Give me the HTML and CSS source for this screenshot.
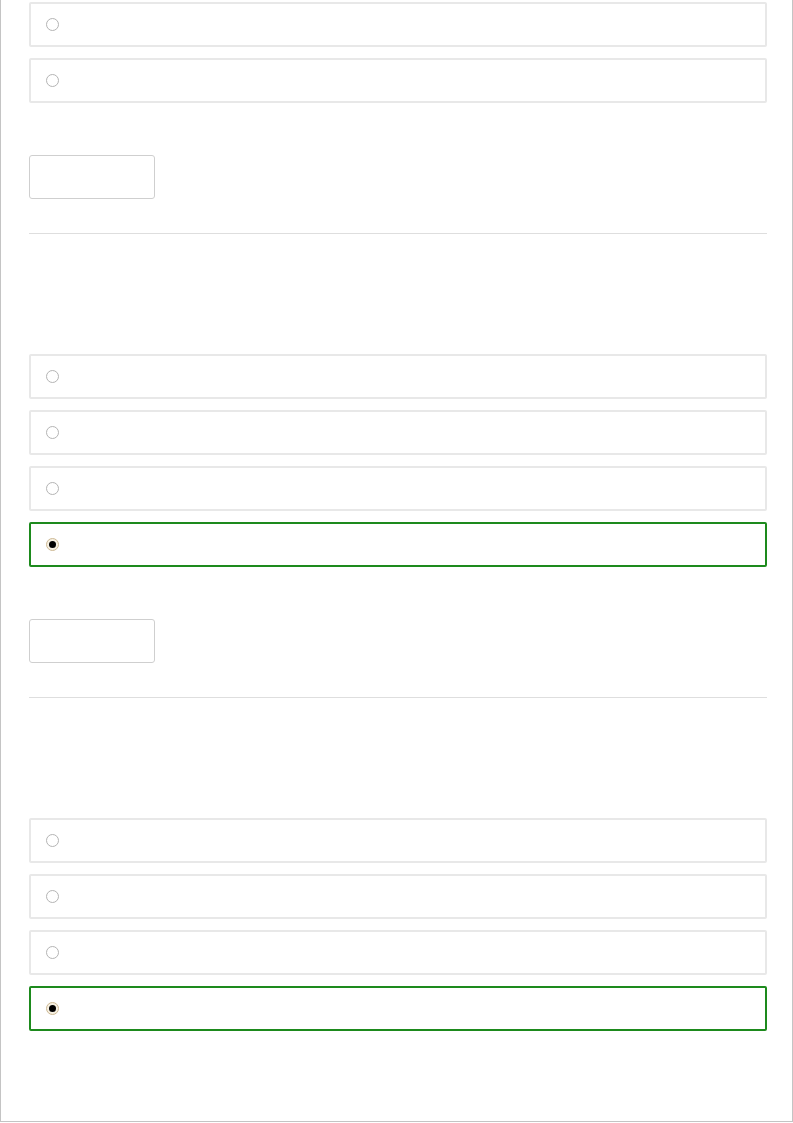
FILE: index.html
```html
<!DOCTYPE html>
<html lang="en">
<head>
    <meta charset="UTF-8">
    <meta name="viewport" content="width=device-width, initial-scale=1.0">
    <title>Quiz</title>
    <link rel="stylesheet" href="styles.css">
</head>
<body>

<div class="page">
    <!-- question 1 (scrolled, only the last options are visible) -->
    <form class="question first">
        <div class="options">
            <label class="option"><span class="radio"></span></label>
            <label class="option"><span class="radio"></span></label>
        </div>
        <button type="button" class="submit"></button>
    </form>
    <hr class="divider">

    <!-- question 2 -->
    <form class="question">
        <div class="question-text"></div>
        <div class="options">
            <label class="option"><span class="radio"></span></label>
            <label class="option"><span class="radio"></span></label>
            <label class="option"><span class="radio"></span></label>
            <label class="option selected"><span class="radio checked"></span></label>
        </div>
        <button type="button" class="submit"></button>
    </form>
    <hr class="divider">

    <!-- question 3 -->
    <form class="question">
        <div class="question-text"></div>
        <div class="options">
            <label class="option"><span class="radio"></span></label>
            <label class="option"><span class="radio"></span></label>
            <label class="option"><span class="radio"></span></label>
            <label class="option selected"><span class="radio checked"></span></label>
        </div>
    </form>
</div>

</body>
</html>
```

FILE: styles.css
```css
html, body {
    margin: 0;
    padding: 0;
    background: white;
    font-family: "Liberation Sans", Arial, sans-serif;
}

.page {
    box-sizing: border-box;
    width: 793px;
    height: 1122px;
    padding: 0 25px 0 28px;
    border: 1px solid #c4c4c4;
    border-top: none;
    overflow: hidden;
}

.question {
    margin: 0;
}

.question.first {
    padding-top: 2px;
}

.question-text {
    height: 120px;
}

.options {
    display: flex;
    flex-direction: column;
    gap: 11px;
}

.option {
    box-sizing: border-box;
    display: flex;
    align-items: center;
    height: 45px;
    padding-left: 15px;
    border: 2px solid #e8e8e8;
    border-radius: 2px;
    cursor: pointer;
}

.option.selected {
    border-color: #1d8a1d;
}

.radio {
    box-sizing: border-box;
    display: inline-block;
    width: 13px;
    height: 13px;
    border: 1px solid #b4b4b4;
    border-radius: 50%;
    background: white;
    position: relative;
}

.radio.checked {
    border-color: #cdb994;
    background: #f6f0e2;
}

.radio.checked::after {
    content: "";
    position: absolute;
    left: 2px;
    top: 2px;
    width: 7px;
    height: 7px;
    border-radius: 50%;
    background: black;
}

.submit {
    display: block;
    box-sizing: border-box;
    width: 126px;
    height: 44px;
    margin-top: 52px;
    border: 1px solid #cfcfcf;
    border-radius: 3px;
    background: white;
    cursor: pointer;
}

.divider {
    margin: 34px 0 0 0;
    border: none;
    border-top: 1px solid #dedede;
    height: 0;
}
```
